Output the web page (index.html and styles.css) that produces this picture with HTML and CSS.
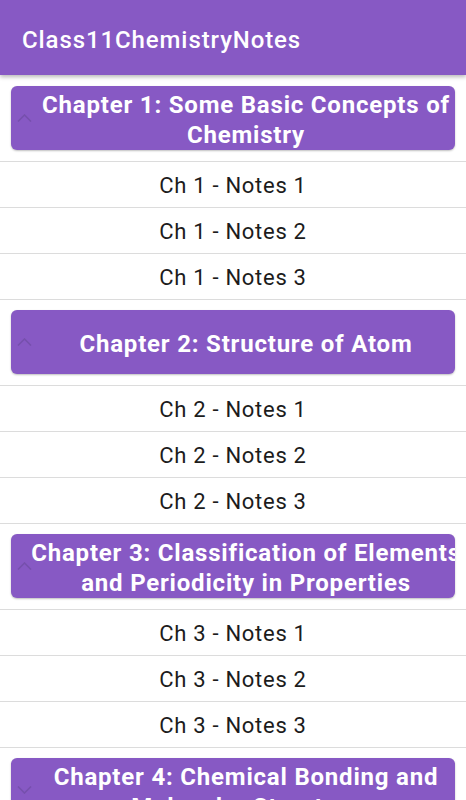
FILE: index.html
```html
<!DOCTYPE html>
<html>
<head>
<meta charset="utf-8">
<link rel="stylesheet" href="styles.css">
</head>
<body>
<header class="appbar"><h1 class="title">Class11ChemistryNotes</h1></header>
<main class="list">
  <section class="chapter">
    <div class="chapter-head">
      <svg class="chev" viewBox="0 0 15 8" width="15" height="8"><path d="M1 7.5 L7.5 1 L14 7.5" fill="none" stroke="currentColor" stroke-width="1.6"/></svg>
      <div class="chapter-title">Chapter 1: Some Basic Concepts of Chemistry</div>
    </div>
    <ul class="notes">
      <li>Ch 1 - Notes 1</li>
      <li>Ch 1 - Notes 2</li>
      <li>Ch 1 - Notes 3</li>
    </ul>
  </section>
  <section class="chapter">
    <div class="chapter-head">
      <svg class="chev" viewBox="0 0 15 8" width="15" height="8"><path d="M1 7.5 L7.5 1 L14 7.5" fill="none" stroke="currentColor" stroke-width="1.6"/></svg>
      <div class="chapter-title">Chapter 2: Structure of Atom</div>
    </div>
    <ul class="notes">
      <li>Ch 2 - Notes 1</li>
      <li>Ch 2 - Notes 2</li>
      <li>Ch 2 - Notes 3</li>
    </ul>
  </section>
  <section class="chapter">
    <div class="chapter-head">
      <svg class="chev" viewBox="0 0 15 8" width="15" height="8"><path d="M1 7.5 L7.5 1 L14 7.5" fill="none" stroke="currentColor" stroke-width="1.6"/></svg>
      <div class="chapter-title">Chapter 3: Classification of Elements and Periodicity in Properties</div>
    </div>
    <ul class="notes">
      <li>Ch 3 - Notes 1</li>
      <li>Ch 3 - Notes 2</li>
      <li>Ch 3 - Notes 3</li>
    </ul>
  </section>
  <section class="chapter">
    <div class="chapter-head">
      <svg class="chev" viewBox="0 0 15 8" width="15" height="8"><path d="M1 0.5 L7.5 7 L14 0.5" fill="none" stroke="currentColor" stroke-width="1.6"/></svg>
      <div class="chapter-title">Chapter 4: Chemical Bonding and Molecular Structure</div>
    </div>
  </section>
</main>
</body>
</html>
```
FILE: styles.css
```css
* { box-sizing: border-box; }
html, body { margin: 0; padding: 0; background: #fff; }
body { font-family: Roboto, "Noto Sans", sans-serif; }

.appbar {
  height: 75px;
  background: #8759c4;
  box-shadow: 0 2px 4px rgba(0,0,0,0.28);
  display: flex;
  align-items: center;
  padding-left: 22px;
  position: relative;
  z-index: 1;
}
.title {
  margin: 0;
  font-size: 24px;
  font-weight: 500;
  letter-spacing: 0.9px;
  color: #fff;
  padding-top: 4px;
}

.list { padding-top: 11px; }

.chapter { margin-bottom: 10px; }

.chapter-head {
  margin: 0 11px 11px;
  height: 64px;
  background: #8759c4;
  border-radius: 6px;
  box-shadow: 0 1px 2px rgba(0,0,0,0.25);
  display: flex;
  align-items: center;
  padding-left: 6px;
  overflow: hidden;
}
.chev {
  flex: none;
  color: #7650ad;
}
.chapter-title {
  flex: none;
  width: 432px;
  margin-left: -2px;
  text-align: center;
  color: #fff;
  font-weight: 700;
  font-size: 24px;
  letter-spacing: 0.8px;
  line-height: 30px;
  padding-top: 3px;
}

.notes {
  list-style: none;
  margin: 0;
  padding: 0;
  border-top: 1px solid #dcdcdc;
}
.notes li {
  height: 46px;
  border-bottom: 1px solid #dcdcdc;
  display: flex;
  align-items: center;
  justify-content: center;
  font-size: 22px;
  letter-spacing: 0.7px;
  color: #1c1c1c;
  padding-top: 1px;
}
```
